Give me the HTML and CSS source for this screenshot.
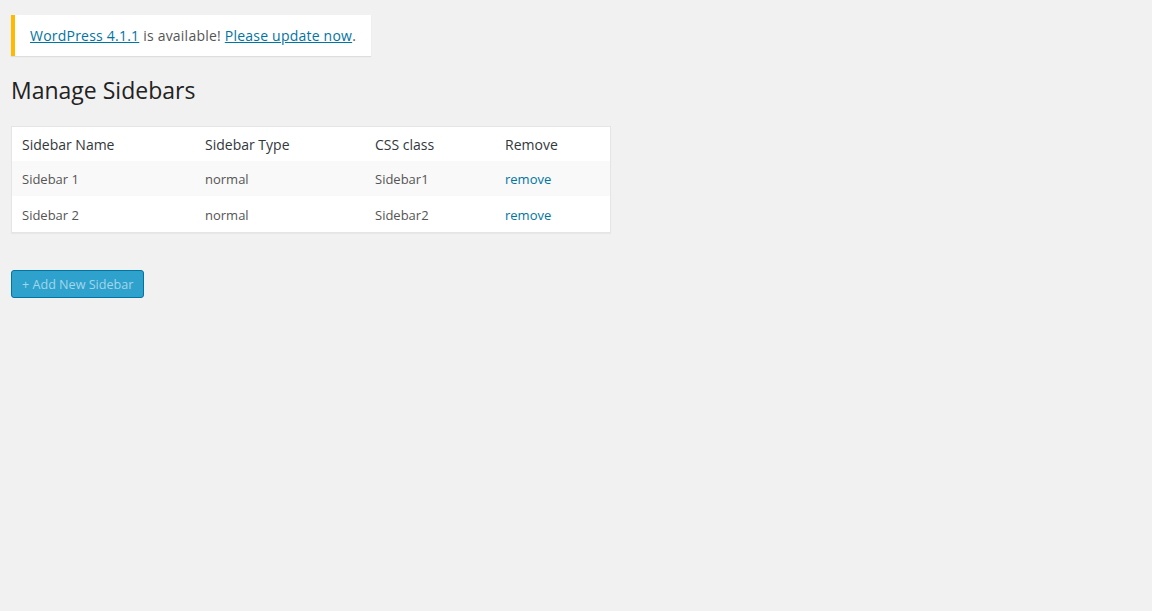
FILE: index.html
```html
<!DOCTYPE html>
<html>
<head>
    <link rel="stylesheet" href="styles.css">
</head>
<body>
    <div class="wrap">
        <div class="update-nag">
            <a href="#">WordPress 4.1.1</a> is available! <a href="#">Please update now</a>.
        </div>

        <h2>Manage Sidebars</h2>

        <table class="sidebars">
            <thead>
                <tr>
                    <th class="col-name">Sidebar Name</th>
                    <th class="col-type">Sidebar Type</th>
                    <th class="col-class">CSS class</th>
                    <th>Remove</th>
                </tr>
            </thead>
            <tbody>
                <tr class="alt">
                    <td>Sidebar 1</td>
                    <td>normal</td>
                    <td>Sidebar1</td>
                    <td><a href="#" class="remove">remove</a></td>
                </tr>
                <tr>
                    <td>Sidebar 2</td>
                    <td>normal</td>
                    <td>Sidebar2</td>
                    <td><a href="#" class="remove">remove</a></td>
                </tr>
            </tbody>
        </table>

        <button class="add-btn">+ Add New Sidebar</button>
    </div>
</body>
</html>
```

FILE: styles.css
```css
* {
    margin: 0;
    padding: 0;
    box-sizing: border-box;
}

body {
    font-family: 'Open Sans', sans-serif;
    background-color: #f1f1f1;
    color: #444;
    font-size: 13px;
}

.wrap {
    padding: 15px 0 0 11px;
}

.update-nag {
    display: inline-block;
    background: #fff;
    border-left: 4px solid #ffba00;
    box-shadow: 0 1px 1px rgba(0, 0, 0, 0.08);
    padding: 10px 15px 10px 15px;
    font-size: 14px;
    letter-spacing: 0.22px;
    line-height: 21px;
    color: #555;
}

.update-nag a {
    color: #0074a2;
}

h2 {
    font-size: 23px;
    font-weight: 400;
    color: #222;
    line-height: 29px;
    margin: 20px 0 21px 0;
}

.sidebars {
    width: 600px;
    border: 1px solid #e5e5e5;
    border-spacing: 0;
    background: #fff;
    box-shadow: 0 1px 1px rgba(0, 0, 0, 0.04);
}

.sidebars th {
    text-align: left;
    font-weight: 400;
    font-size: 14px;
    color: #32373c;
    padding: 8px 10px 7px 10px;
    line-height: 19px;
}

.sidebars td {
    padding: 10px 10px 8px 10px;
    line-height: 17px;
    color: #555;
}

.sidebars tr:last-child td {
    padding-top: 11px;
}

.col-name {
    width: 183px;
}

.col-type {
    width: 170px;
}

.col-class {
    width: 130px;
}

.sidebars tr.alt td {
    background: #f9f9f9;
}

.remove {
    color: #0074a2;
    text-decoration: none;
}

.add-btn {
    margin-top: 37px;
    font-family: 'Open Sans', sans-serif;
    font-size: 12.6px;
    height: 28px;
    padding: 0 10px;
    background: #2ea2cc;
    border: 1px solid #0074a2;
    border-radius: 3px;
    color: #a3d6eb;
    cursor: pointer;
}
```
